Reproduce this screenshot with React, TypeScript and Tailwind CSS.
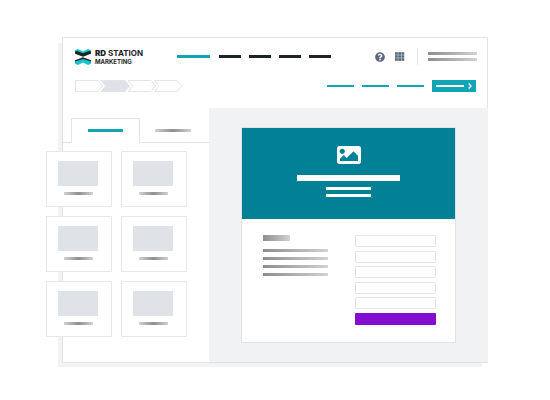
import React from "react";
import { FaQuestionCircle } from "react-icons/fa";

const centerFade = "bg-linear-to-r from-[#d2d2d2] via-[#8e8e8e] to-[#d2d2d2]";
const sideFade = "bg-linear-to-r from-[#8e8e8e] to-[#d2d2d2]";

function Logo() {
  return (
    <a href="#home" className="flex w-[102px] items-center gap-1 text-[#1d2327]">
      <svg viewBox="0 0 16 16" className="h-4 w-4 shrink-0" aria-hidden="true">
        <path d="M0 1.2 L3 0 L8 2.4 L13 0 L16 1.2 V3.2 L8 5.6 L0 3.2Z" fill="#19c1ce" />
        <path d="M0 2.6 L2 2 L8 4.2 L14 2 L16 2.6 V4.8 L8 7.8 L0 4.8Z" fill="#1d2327" />
        <path d="M0 11.2 L8 8.2 L16 11.2 V13.4 L14 14 L8 11.8 L2 14 L0 13.4Z" fill="#1d2327" />
        <path d="M0 12.6 L8 10 L16 12.6 V14.8 L13 16 L8 13.6 L3 16 L0 14.8Z" fill="#19c1ce" />
      </svg>
      <span className="flex flex-col whitespace-nowrap font-bold">
        <span className="text-[8px] leading-[10px]">
          <span className="font-black">RD</span> STATION
        </span>
        <span className="text-[6px] leading-[7px]">MARKETING</span>
      </span>
    </a>
  );
}

function Steps() {
  return (
    <svg viewBox="0 0 108 12" className="h-3 w-[108px] shrink-0" fill="none" stroke="#e2e4e9" strokeWidth="1" aria-hidden="true">
      <path d="M0.5 0.5 H23 L28 6 L23 11.5 H0.5Z" />
      <path d="M26 0.5 H50 L54.5 6 L50 11.5 H26 L30.5 6Z" fill="#dfe2e8" />
      <path d="M53 0.5 H76 L80.5 6 L76 11.5 H53 L57.5 6Z" />
      <path d="M79.5 0.5 H102 L107 6 L102 11.5 H79.5 L84 6Z" />
    </svg>
  );
}

function AppsIcon() {
  const cells = [0, 1, 2];
  return (
    <svg viewBox="0 0 10 10" className="h-[10px] w-[10px]" fill="#5a6879" aria-hidden="true">
      {cells.map((r) =>
        cells.map((c) => <rect key={`${r}${c}`} x={c * 3.2} y={0.2 + r * 3} width="2.8" height="2.6" />)
      )}
    </svg>
  );
}

function Header() {
  return (
    <header className="flex flex-col gap-[15px] pt-[10px] pr-[10px] pb-4 pl-3">
      <div className="flex h-[17px] items-center">
        <Logo />
        <nav className="flex items-center gap-2" aria-label="Main">
          <a href="#start" aria-label="Start" className="mr-px h-[3px] w-[33px] bg-[#12a5b5]" />
          {["Attract", "Convert", "Relate", "Analyze"].map((n) => (
            <a key={n} href={`#${n}`} aria-label={n} className="h-[3px] w-[22px] bg-[#1d2327]" />
          ))}
        </nav>
        <div className="ml-auto flex items-center gap-[10px]">
          <button aria-label="Help" className="text-[#5a6879]">
            <FaQuestionCircle className="h-[10px] w-[10px]" />
          </button>
          <button aria-label="Apps">
            <AppsIcon />
          </button>
          <div className="ml-[2px] h-[17px] w-px bg-[#e6e6e8]" />
          <button aria-label="Account" className="flex w-[49px] flex-col gap-[3px]">
            <span className={`h-[3px] w-full ${sideFade}`} />
            <span className={`h-[3px] w-full ${sideFade}`} />
          </button>
        </div>
      </div>
      <div className="flex h-3 items-center pr-px">
        <Steps />
        <nav className="ml-auto flex items-center gap-2" aria-label="Page">
          {["Preview", "Settings", "Save"].map((n) => (
            <a key={n} href={`#${n}`} aria-label={n} className="h-[2px] w-[27px] bg-[#12a5b5]" />
          ))}
          <button aria-label="Next" className="flex h-3 w-11 items-center justify-between bg-[#12a5b5] px-1">
            <span className="h-[2px] w-7 bg-white" />
            <svg viewBox="0 0 4 6" className="h-[6px] w-1" fill="none" stroke="#fff" strokeWidth="1.4" aria-hidden="true">
              <path d="M0.7 0.5 L3 3 L0.7 5.5" />
            </svg>
          </button>
        </nav>
      </div>
    </header>
  );
}

function Blocks() {
  return (
    <aside className="w-[146px] shrink-0 pt-[10px]">
      <div className="flex h-[25px]" role="tablist">
        <div className="w-2 border-b border-[#e2e4e9]" />
        <button role="tab" aria-selected="true" aria-label="Elements" className="flex w-[69px] justify-center border border-b-0 border-[#e2e4e9] bg-white pt-[10px]">
          <span className="h-[3px] w-[35px] bg-[#12a5b5]" />
        </button>
        <button role="tab" aria-selected="false" aria-label="Styles" className="flex flex-1 justify-center border-b border-[#e2e4e9] pt-[11px] pr-[3px]">
          <span className={`h-[3px] w-9 ${centerFade}`} />
        </button>
      </div>
      <div className="relative -ml-[17px] mt-2 grid w-[141px] grid-cols-2 gap-[9px]">
        {[1, 2, 3, 4, 5, 6].map((n) => (
          <button
            key={n}
            aria-label={`Block ${n}`}
            className="flex h-14 flex-col items-center gap-[6px] border border-[#e6e8ec] bg-white pt-[9px] pr-[2px]"
          >
            <span className="h-[25px] w-10 bg-[#dfe3e8]" />
            <span className={`h-[3px] w-[29px] ${centerFade}`} />
          </button>
        ))}
      </div>
    </aside>
  );
}

function LandingPage() {
  return (
    <article className="border border-[#dfe2e8] bg-white">
      <div className="flex h-[91px] flex-col items-center bg-[#018096] pt-[18px]">
        <svg viewBox="0 64 512 384" className="h-[18px] w-6" fill="#fff" aria-hidden="true">
          <path d="M464 448H48c-26.51 0-48-21.49-48-48V112c0-26.51 21.49-48 48-48h416c26.51 0 48 21.49 48 48v288c0 26.51-21.49 48-48 48zM112 120c-30.928 0-56 25.072-56 56s25.072 56 56 56 56-25.072 56-56-25.072-56-56-56zM64 384h384V272l-87.515-87.515c-4.686-4.686-12.284-4.686-16.971 0L208 320l-55.515-55.515c-4.686-4.686-12.284-4.686-16.971 0L64 336v48z" />
        </svg>
        <div className="mt-[11px] h-[6px] w-[103px] bg-white" />
        <div className="mt-[6px] h-[3px] w-[45px] bg-white" />
        <div className="mt-1 h-[3px] w-[45px] bg-white" />
      </div>
      <div className="flex justify-between pt-4 pr-[19px] pb-[17px] pl-[21px]">
        <div className="flex w-[65px] flex-col gap-[5px]">
          <div className={`mb-[3px] h-[6px] w-[27px] ${sideFade}`} />
          {[1, 2, 3, 4].map((n) => (
            <div key={n} className={`h-[3px] w-full ${sideFade}`} />
          ))}
        </div>
        <form className="flex h-[90px] w-[81px] flex-col justify-between">
          {["Name", "Email", "Phone", "Company", "Role"].map((n) => (
            <input key={n} aria-label={n} className="h-3 w-full rounded-[1px] border border-[#e2e4e9] bg-white" />
          ))}
          <button type="button" aria-label="Submit" className="h-3 w-full rounded-[1px] bg-[#850dd0]" />
        </form>
      </div>
    </article>
  );
}

export default function App() {
  return (
    <div className="min-h-screen bg-white px-[62px] py-[37px] font-['Inter',sans-serif]">
      <div className="border border-[#dfe2e8] bg-white shadow-[-5px_5px_0_-1px_#f3f3f4]">
        <Header />
        <div className="flex">
          <Blocks />
          <main className="-mr-px flex-1 bg-[#f1f2f4] px-8 py-[19px]">
            <LandingPage />
          </main>
        </div>
      </div>
    </div>
  );
}
